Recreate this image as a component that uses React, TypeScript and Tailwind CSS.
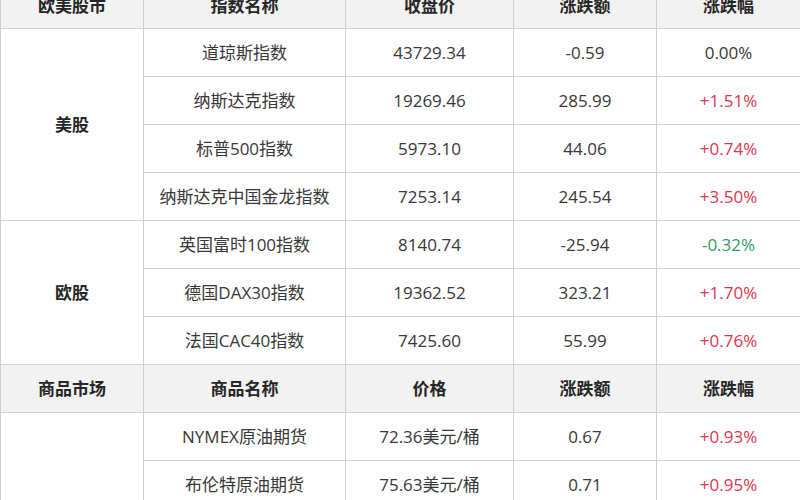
import React from "react";

type Row = { name: string; price: string; chg: string; pct: string; color: "red" | "green" | "none" };

const groups1: { label: string; rows: Row[] }[] = [
  {
    label: "美股",
    rows: [
      { name: "道琼斯指数", price: "43729.34", chg: "-0.59", pct: "0.00%", color: "none" },
      { name: "纳斯达克指数", price: "19269.46", chg: "285.99", pct: "+1.51%", color: "red" },
      { name: "标普500指数", price: "5973.10", chg: "44.06", pct: "+0.74%", color: "red" },
      { name: "纳斯达克中国金龙指数", price: "7253.14", chg: "245.54", pct: "+3.50%", color: "red" },
    ],
  },
  {
    label: "欧股",
    rows: [
      { name: "英国富时100指数", price: "8140.74", chg: "-25.94", pct: "-0.32%", color: "green" },
      { name: "德国DAX30指数", price: "19362.52", chg: "323.21", pct: "+1.70%", color: "red" },
      { name: "法国CAC40指数", price: "7425.60", chg: "55.99", pct: "+0.76%", color: "red" },
    ],
  },
];

const groups2: { label: string; rows: Row[] }[] = [
  {
    label: "能源",
    rows: [
      { name: "NYMEX原油期货", price: "72.36美元/桶", chg: "0.67", pct: "+0.93%", color: "red" },
      { name: "布伦特原油期货", price: "75.63美元/桶", chg: "0.71", pct: "+0.95%", color: "red" },
      { name: "NYMEX天然气", price: "3.21美元", chg: "0.05", pct: "+1.58%", color: "red" },
      { name: "NYMEX汽油", price: "2.01美元", chg: "0.02", pct: "+1.00%", color: "red" },
    ],
  },
];

const td = "border border-[#d0d0d0] text-center align-middle h-[48px] p-0";
const thBase = "border border-[#d0d0d0] text-center align-middle p-0 bg-[#f2f2f2] font-bold text-[#262626]";

function pctClass(c: Row["color"]) {
  if (c === "red") return "text-[#e0344f]";
  if (c === "green") return "text-[#2e9e5e]";
  return "text-[#383838]";
}

function Header({ cols, first }: { cols: string[]; first?: boolean }) {
  return (
    <tr>
      {cols.map((c) => (
        <td key={c} className={thBase + (first ? " h-[45px]" : " h-[48px]")}>
          {c}
        </td>
      ))}
    </tr>
  );
}

function Group({ label, rows }: { label: string; rows: Row[] }) {
  return (
    <>
      {rows.map((r, i) => (
        <tr key={r.name}>
          {i === 0 && (
            <td rowSpan={rows.length} className={td + " font-bold text-[#262626]"}>
              {label}
            </td>
          )}
          <td className={td}>{r.name}</td>
          <td className={td}>{r.price}</td>
          <td className={td}>{r.chg}</td>
          <td className={td + " " + pctClass(r.color)}>{r.pct}</td>
        </tr>
      ))}
    </>
  );
}

export default function App() {
  return (
    <div className="w-[800px] h-[500px] overflow-hidden bg-white">
      <div
        className="-mt-[17px] text-[17px] leading-[24px] text-[#383838]"
        style={{ fontFamily: '"Open Sans", "Noto Sans CJK SC", sans-serif' }}
      >
        <table className="w-[800px] table-fixed border-collapse">
          <colgroup>
            <col className="w-[143px]" />
            <col className="w-[202px]" />
            <col className="w-[168px]" />
            <col className="w-[143px]" />
            <col className="w-[144px]" />
          </colgroup>
          <tbody>
            <Header first cols={["欧美股市", "指数名称", "收盘价", "涨跌额", "涨跌幅"]} />
            {groups1.map((g) => (
              <Group key={g.label} {...g} />
            ))}
            <Header cols={["商品市场", "商品名称", "价格", "涨跌额", "涨跌幅"]} />
            {groups2.map((g) => (
              <Group key={g.label} {...g} />
            ))}
          </tbody>
        </table>
      </div>
    </div>
  );
}
